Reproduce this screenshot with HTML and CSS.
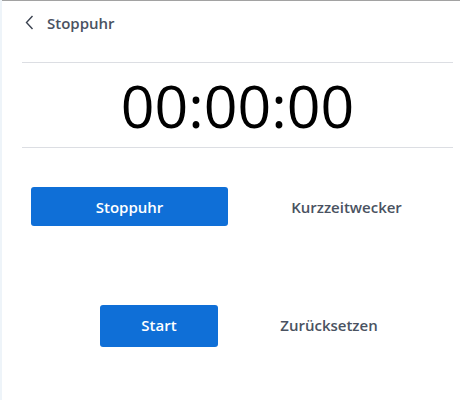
FILE: index.html
```html
<!DOCTYPE html>
<html>

<head>
  <meta charset="utf-8">
  <title>Stoppuhr</title>
  <link rel="stylesheet" href="styles.css">
</head>

<body>
  <div class="app">
    <div class="topbar">
      <button class="back" aria-label="Zurück">
        <svg width="9" height="15" viewBox="0 0 9 15">
          <path d="M7.5 1 L1.5 7.5 L7.5 14" fill="none" stroke="#3b4250" stroke-width="1.4" />
        </svg>
      </button>
      <span class="title">Stoppuhr</span>
    </div>

    <div class="display">00:00:00</div>

    <div class="modes">
      <button class="mode active">Stoppuhr</button>
      <button class="mode">Kurzzeitwecker</button>
    </div>

    <div class="actions">
      <button class="btn primary">Start</button>
      <button class="btn">Zurücksetzen</button>
    </div>
  </div>
</body>

</html>
```

FILE: styles.css
```css
* {
  margin: 0;
  padding: 0;
  box-sizing: border-box;
}

html,
body {
  height: 100%;
}

body {
  font-family: 'Open Sans', sans-serif;
  background-color: #eef4f9;
  overflow: hidden;
}

.app {
  height: 100%;
  margin-left: 2px;
  background-color: #fff;
  border-top: 1px solid #a2a2a2;
}

button {
  font-family: inherit;
  border: none;
  background: none;
  cursor: pointer;
}

.topbar {
  display: flex;
  align-items: center;
  height: 43px;
  padding-left: 23px;
}

.back {
  display: flex;
  align-items: center;
  width: 22px;
  height: 20px;
}

.title {
  font-size: 15px;
  font-weight: 600;
  color: #4a5261;
}

.display {
  margin: 18px 7px 0 20px;
  height: 86px;
  border-top: 1px solid #dcdee3;
  border-bottom: 1px solid #dcdee3;
  display: flex;
  align-items: center;
  justify-content: center;
  font-size: 59px;
  color: #000;
}

.modes {
  display: flex;
  gap: 20px;
  margin-top: 39px;
  padding-left: 29px;
}

.mode {
  width: 197px;
  height: 39px;
  border-radius: 3px;
  font-size: 15px;
  font-weight: 600;
  color: #4a5261;
}

.mode.active,
.btn.primary {
  background-color: #0f6fd7;
  color: #fff;
}

.actions {
  display: flex;
  gap: 52px;
  margin-top: 79px;
  padding-left: 98px;
}

.btn {
  width: 118px;
  height: 42px;
  padding-bottom: 3px;
  border-radius: 3px;
  font-size: 15px;
  font-weight: 600;
  color: #4a5261;
}
```
